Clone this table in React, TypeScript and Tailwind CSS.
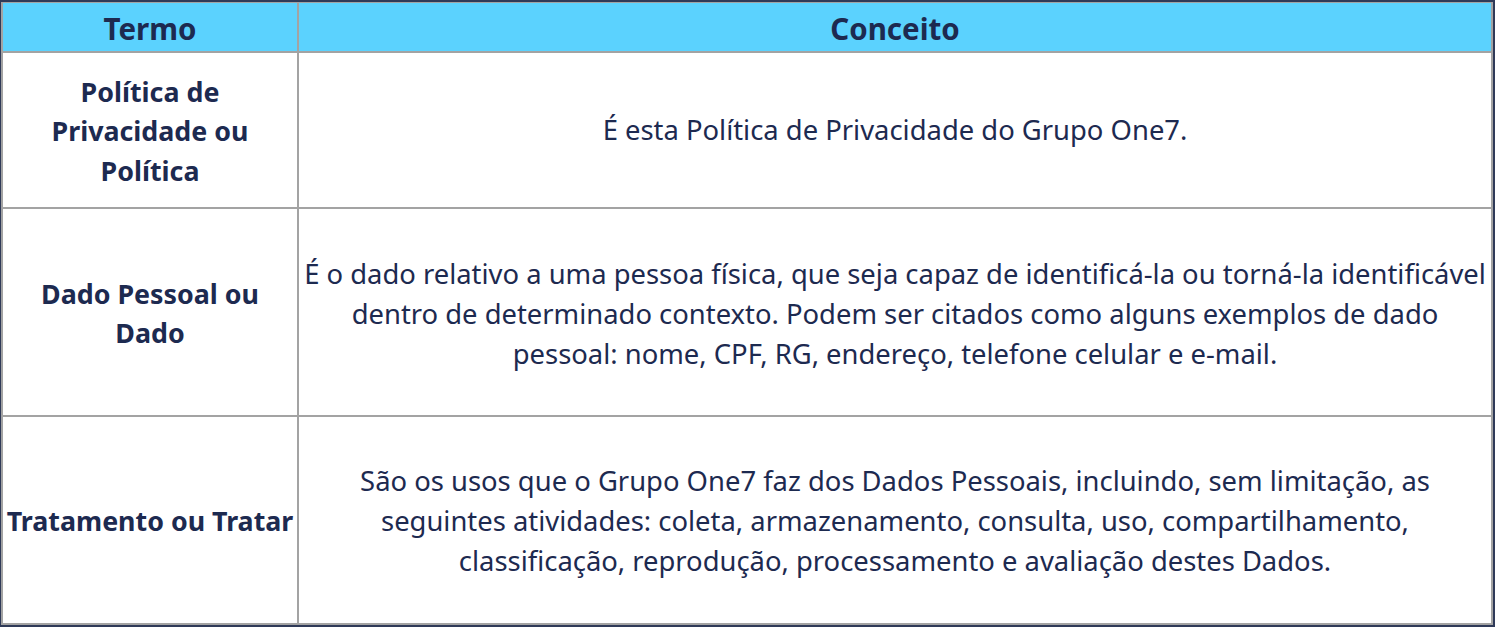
import React from "react";

const font = { fontFamily: '"Noto Sans", "Open Sans", sans-serif' };

function Lines({ lines }: { lines: string[] }) {
  return (
    <>
      {lines.map((l, i) => (
        <div key={i} className="whitespace-nowrap">
          {l}
        </div>
      ))}
    </>
  );
}

export default function App() {
  const rows: { term: string[]; concept: string[]; h: string; pt: string }[] = [
    {
      term: ["Política de", "Privacidade ou", "Política"],
      concept: ["É esta Política de Privacidade do Grupo One7."],
      h: "h-[154px]",
      pt: "pt-0",
    },
    {
      term: ["Dado Pessoal ou", "Dado"],
      concept: [
        "É o dado relativo a uma pessoa física, que seja capaz de identificá-la ou torná-la identificável",
        "dentro de determinado contexto. Podem ser citados como alguns exemplos de dado",
        "pessoal: nome, CPF, RG, endereço, telefone celular e e-mail.",
      ],
      h: "h-[206px]",
      pt: "pt-[3px]",
    },
    {
      term: ["Tratamento ou Tratar"],
      concept: [
        "São os usos que o Grupo One7 faz dos Dados Pessoais, incluindo, sem limitação, as",
        "seguintes atividades: coleta, armazenamento, consulta, uso, compartilhamento,",
        "classificação, reprodução, processamento e avaliação destes Dados.",
      ],
      h: "h-[206px]",
      pt: "pt-[2px]",
    },
  ];
  return (
    <div
      className="w-[1495px] h-[627px] bg-white border-t-2 border-b-2 border-l border-r-2 border-[#2f3a58] overflow-hidden"
      style={font}
    >
      <div className="grid grid-cols-[294px_1fr] gap-[2px] bg-[#a3a3a3] pt-px pb-[2px] px-[2px] text-[#1d2a50]">
        <div className="h-[48px] bg-[#5bd2fe] flex items-center justify-center pt-[3px] text-[29.5px] leading-none font-bold">
          Termo
        </div>
        <div className="h-[48px] bg-[#5bd2fe] flex items-center justify-center pt-[3px] text-[29.5px] leading-none font-bold">
          Conceito
        </div>
        {rows.map((r, i) => (
          <React.Fragment key={i}>
            <div
              className={`${r.h} pt-[2px] bg-white flex flex-col items-center justify-center text-center text-[26.8px] leading-[39.5px] font-bold`}
            >
              <Lines lines={r.term} />
            </div>
            <div
              className={`${r.h} ${r.pt} bg-white flex flex-col items-center justify-center text-center text-[27.4px] leading-[40px]`}
            >
              <Lines lines={r.concept} />
            </div>
          </React.Fragment>
        ))}
      </div>
    </div>
  );
}
